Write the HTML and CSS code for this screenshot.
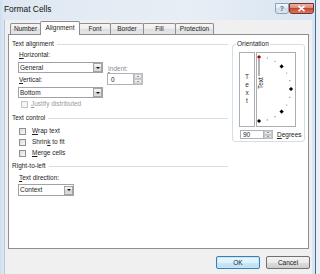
FILE: index.html
```html
<!DOCTYPE html>
<html>
<head>
<meta charset="UTF-8">
<title>Format Cells</title>
<link rel="stylesheet" href="styles.css">
</head>
<body>
<div class="window">
	<div class="titlebar">
		<span class="title">Format Cells</span>
		<div class="caption">
			<span class="cbtn help">?</span>
			<span class="cbtn close">
				<svg width="9" height="7" viewBox="0 0 9 7"><path d="M1.5 0.8 L7.5 6.2 M7.5 0.8 L1.5 6.2" stroke="#fff" stroke-width="1.6"/></svg>
			</span>
		</div>
	</div>
	<div class="client">
		<div class="tabs">
			<span class="tab t-number">Number</span>
			<span class="tab t-align active">Alignment</span>
			<span class="tab t-font">Font</span>
			<span class="tab t-border">Border</span>
			<span class="tab t-fill">Fill</span>
			<span class="tab t-prot">Protection</span>
		</div>
		<div class="panel">
			<div class="col-left">
				<div class="gtitle">Text alignment</div>
				<div class="align-grid">
					<div class="col-a">
						<div class="lbl"><u>H</u>orizontal:</div>
						<div class="select w-general"><span class="val">General</span><span class="drop"></span></div>
						<div class="lbl"><u>V</u>ertical:</div>
						<div class="select w-general"><span class="val">Bottom</span><span class="drop"></span></div>
					</div>
					<div class="col-b">
						<div class="lbl-indent"><u>I</u>ndent:</div>
						<div class="spin indent">
							<span class="spin-box">0</span>
							<span class="arrows"><span class="up"></span><span class="down"></span></span>
						</div>
					</div>
				</div>
				<div class="check justify disabled"><span class="box"></span><span><u>J</u>ustify distributed</span></div>

				<div class="gtitle gap-top">Text control</div>
				<div class="check first"><span class="box"></span><span><u>W</u>rap text</span></div>
				<div class="check"><span class="box"></span><span>Shrin<u>k</u> to fit</span></div>
				<div class="check"><span class="box"></span><span><u>M</u>erge cells</span></div>

				<div class="gtitle gap-top2">Right-to-left</div>
				<div class="lbl dir"><u>T</u>ext direction:</div>
				<div class="select w-context"><span class="val">Context</span><span class="drop"></span></div>
			</div>

			<div class="col-right">
				<div class="orient">
					<div class="orient-title">Orientation</div>
					<div class="dial-row">
						<div class="vtext"><span>T</span><span>e</span><span>x</span><span>t</span></div>
						<div class="dial">
							<svg width="38" height="73" viewBox="0 0 38 73">
								<line x1="2" y1="6" x2="2" y2="23" stroke="#444" stroke-width="0.8"/>
								<text transform="translate(5.6 36) rotate(-90)" font-family="Liberation Sans, Arial, sans-serif" font-size="6.5" fill="#222">Text</text>
								<g fill="#777">
									<circle cx="10.3" cy="5.1" r="0.6"/>
									<circle cx="18" cy="8.3" r="0.6"/>
									<circle cx="29.7" cy="20" r="0.6"/>
									<circle cx="32.9" cy="27.7" r="0.6"/>
									<circle cx="32.9" cy="44.3" r="0.6"/>
									<circle cx="29.7" cy="52" r="0.6"/>
									<circle cx="18" cy="63.7" r="0.6"/>
									<circle cx="10.3" cy="66.9" r="0.6"/>
								</g>
								<g fill="#000">
									<rect x="23.1" y="11.9" width="3" height="3" transform="rotate(45 24.6 13.4)"/>
									<rect x="32.5" y="34.5" width="3" height="3" transform="rotate(45 34 36)"/>
									<rect x="23.1" y="57.1" width="3" height="3" transform="rotate(45 24.6 58.6)"/>
									<rect x="0.5" y="66.5" width="3" height="3" transform="rotate(45 2 68)"/>
								</g>
								<rect x="0.5" y="2.5" width="3" height="3" fill="#b00000" transform="rotate(45 2 4)"/>
							</svg>
						</div>
					</div>
					<div class="deg-row">
						<div class="spin deg">
							<span class="spin-box">90</span>
							<span class="arrows"><span class="up"></span><span class="down"></span></span>
						</div>
						<span class="deg-lbl"><u>D</u>egrees</span>
					</div>
				</div>
			</div>
		</div>
		<div class="footer">
			<span class="btn default">OK</span>
			<span class="btn">Cancel</span>
		</div>
	</div>
</div>
</body>
</html>
```
FILE: styles.css
```css
* {
	box-sizing: border-box;
}

html, body {
	margin: 0;
}

body {
	width: 320px;
	height: 274px;
	overflow: hidden;
	background: #e9f0f7;
	font-family: "Liberation Sans", Arial, sans-serif;
	font-size: 6.5px;
	color: #1c1c1c;
}

u {
	text-decoration-thickness: 0.6px;
	text-underline-offset: 1px;
}

.window {
	width: 316px;
	height: 274px;
	padding: 0 3px 0 4px;
	background: linear-gradient(90deg, #cfdff0 0, #dfe8f2 4px, #e7eef5 60%, #d9e5f1);
	border-right: 1px solid #4a6d8c;
	display: flex;
	flex-direction: column;
}

/* title bar */
.titlebar {
	height: 20px;
	display: flex;
	align-items: flex-start;
}

.title {
	font-size: 8.4px;
	line-height: 10px;
	margin-top: 4px;
	color: #111;
}

.caption {
	margin-left: auto;
	margin-right: -2px;
	margin-top: 3px;
	display: flex;
}

.cbtn {
	height: 11px;
	display: flex;
	align-items: center;
	justify-content: center;
	border-radius: 0 0 3px 3px;
}

.help {
	width: 14px;
	border: 1px solid #8ea2b8;
	background: linear-gradient(#f5f8fb, #e1e9f1 50%, #d2dde9 50%, #dfe7ef);
	color: #5a6b7c;
	font-size: 7px;
	font-weight: bold;
}

.close {
	width: 25px;
	border: 1px solid #7a3328;
	background: linear-gradient(#eab1a4, #d98673 50%, #c6452f 50%, #d77a62);
}

/* client area */
.client {
	flex: 1;
	background: #f0f0f0;
	border-left: 1px solid #b6c6d8;
	padding: 1px 3px 0 3px;
	display: flex;
	flex-direction: column;
}

.tabs {
	height: 13px;
	padding-left: 2px;
	display: flex;
	align-items: flex-end;
}

.tab {
	height: 11px;
	line-height: 10px;
	text-align: center;
	border: 1px solid #8c8e94;
	border-bottom: none;
	margin-left: -1px;
	background: linear-gradient(#f6f6f6, #ececec 50%, #dedede 50%, #e6e6e6);
	border-radius: 2px 2px 0 0;
	color: #222;
}

.tab.t-number { width: 31px; margin-left: 0; }
.tab.t-align { width: 40px; }
.tab.t-font { width: 32px; }
.tab.t-border { width: 34px; }
.tab.t-fill { width: 33px; }
.tab.t-prot { width: 39px; }

.tab.active {
	height: 14px;
	line-height: 12px;
	background: #fff;
	margin-bottom: -1px;
	position: relative;
	z-index: 1;
}

.panel {
	height: 215px;
	background: #fff;
	border: 1px solid #8c8e94;
	padding: 5px 2px 0 3px;
	display: flex;
	gap: 4px;
}

.col-left {
	width: 216px;
}

.col-right {
	width: 73px;
}

.gtitle {
	height: 8px;
	line-height: 8px;
	display: flex;
	align-items: center;
	gap: 3px;
}

.gtitle::after {
	content: "";
	flex: 1;
	border-top: 1px solid #d5dde5;
}

.gap-top {
	margin-top: 6px;
}

.gap-top2 {
	margin-top: 5px;
}

.lbl {
	line-height: 8px;
	padding-left: 7px;
	margin-top: 3px;
}

.lbl.dir {
	margin-top: 4px;
}

.align-grid {
	display: flex;
	gap: 4px;
}

.select {
	margin: 3px 0 0 6px;
	height: 11px;
	border: 1px solid #9ea3ab;
	background: #fff;
	display: flex;
	align-items: center;
}

.select.w-general {
	width: 85px;
}

.select.w-context {
	width: 56px;
	height: 12px;
	margin-top: 2px;
}

.select .val {
	flex: 1;
	padding-left: 1px;
	line-height: 8px;
}

.select .drop {
	width: 9px;
	height: 9px;
	margin-right: 0;
	border: 1px solid #a4a4a4;
	background: linear-gradient(#f7f7f7, #e4e4e4 50%, #d4d4d4 50%, #dedede);
	display: flex;
	align-items: center;
	justify-content: center;
}

.select .drop::after {
	content: "";
	border-left: 2px solid transparent;
	border-right: 2px solid transparent;
	border-top: 2px solid #111;
}

.col-b {
	padding-top: 17px;
}

.lbl-indent {
	line-height: 8px;
	padding-left: 1px;
	color: #8d8d8d;
}

.spin {
	display: flex;
}

.spin-box {
	border: 1px solid #aeb2b9;
	background: #fff;
	display: flex;
	align-items: center;
}

.spin.indent {
	height: 12px;
}

.spin.indent .spin-box {
	width: 27px;
	padding-left: 3px;
}

.arrows {
	width: 9px;
	display: flex;
	flex-direction: column;
	border: 1px solid #b9bcc2;
	border-left: none;
	background: #fff;
}

.arrows > span {
	flex: 1;
	background: linear-gradient(#f3f3f3, #dcdcdc);
	border: 1px solid #c6c8cc;
	display: flex;
	align-items: center;
	justify-content: center;
}

.arrows .up::after {
	content: "";
	border-left: 1.5px solid transparent;
	border-right: 1.5px solid transparent;
	border-bottom: 1.5px solid #444;
}

.arrows .down::after {
	content: "";
	border-left: 1.5px solid transparent;
	border-right: 1.5px solid transparent;
	border-top: 1.5px solid #444;
}

/* checkboxes */
.check {
	height: 8px;
	margin-top: 3px;
	padding-left: 7px;
	display: flex;
	align-items: center;
	gap: 6px;
	line-height: 8px;
}

.check.first {
	margin-top: 5px;
}

.check .box {
	width: 7px;
	height: 7px;
	border: 1px solid #8e8f8f;
	background: linear-gradient(135deg, #dcdcdc, #f8f8f8);
}

.check.justify {
	margin-top: 2px;
	padding-left: 9px;
	gap: 3px;
}

.check.disabled {
	color: #9a9a9a;
}

.check.disabled .box {
	border-color: #c5c5c5;
	background: #f4f4f4;
}

/* orientation */
.orient {
	margin-top: 4px;
	border: 1px solid #d5dde5;
	border-radius: 3px;
	padding: 0 0 2px 6px;
}

.orient-title {
	width: fit-content;
	margin: -5px 0 0 -3px;
	padding: 0 1px;
	background: #fff;
	line-height: 8px;
}

.dial-row {
	margin-top: 4px;
	display: flex;
	gap: 1px;
}

.vtext {
	width: 16px;
	height: 75px;
	border: 1px solid #a9afb7;
	padding-top: 20px;
	display: flex;
	flex-direction: column;
	align-items: center;
	color: #333;
}

.vtext span {
	line-height: 8px;
}

.dial {
	width: 40px;
	height: 75px;
	border: 1px solid #a9afb7;
}

.dial svg {
	display: block;
}

.deg-row {
	margin-top: 3px;
	display: flex;
	align-items: center;
}

.spin.deg {
	height: 9px;
	margin-left: 1px;
}

.spin.deg .spin-box {
	width: 24px;
	padding-left: 2px;
}

.deg-lbl {
	margin-left: 4px;
	line-height: 8px;
}

/* buttons */
.footer {
	margin-top: 7px;
	margin-right: -1px;
	display: flex;
	justify-content: flex-end;
	gap: 6px;
}

.btn {
	width: 44px;
	height: 13px;
	line-height: 11px;
	text-align: center;
	border: 1px solid #707070;
	border-radius: 2px;
	background: linear-gradient(#f2f2f2, #ebebeb 50%, #dddddd 50%, #cfcfcf);
	color: #222;
}

.btn.default {
	border-color: #3c7fb1;
	background: linear-gradient(#eaf6fd, #dff1fc 50%, #c9e8fb 50%, #b8def6);
	box-shadow: inset 0 0 0 1px #c6e6fa;
}
```
